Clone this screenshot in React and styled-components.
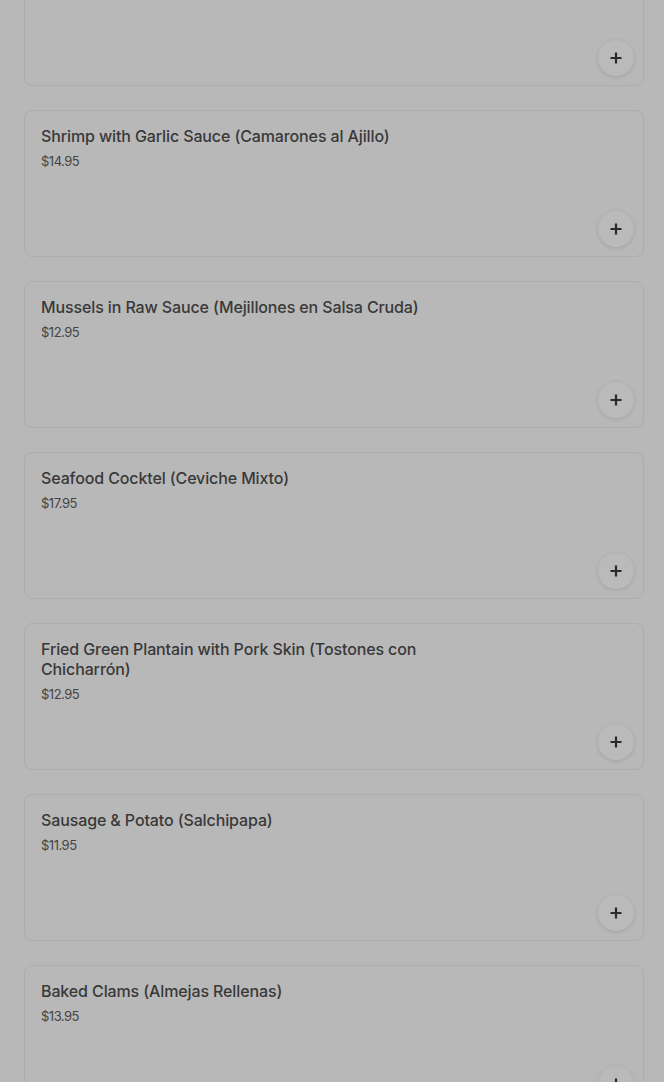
import React from "react";
import styled, { createGlobalStyle } from "styled-components";

const GlobalStyle = createGlobalStyle`
   html, body {
      margin: 0;
      padding: 0;
      background: #b8b8b8;
      font-family: Inter, "Noto Sans", sans-serif;
      overflow: hidden;
   }
`;

const Page = styled.div`
   width: 664px;
   height: 1082px;
   overflow: hidden;
   background: #b8b8b8;
`;

const List = styled.div`
   display: flex;
   flex-direction: column;
   gap: 24px;
   padding: 0 20px 0 24px;
   margin-top: -61px;
`;

const Card = styled.div`
   position: relative;
   height: 147px;
   box-sizing: border-box;
   border: 1px solid #adadad;
   border-radius: 8px;
   padding: 15px 16px;
   display: flex;
   flex-direction: column;
   gap: 6px;
`;

const Title = styled.div`
   max-width: 395px;
   font-size: 16px;
   line-height: 20px;
   font-weight: 500;
   letter-spacing: -0.12px;
   color: #383838;
`;

const Price = styled.div`
   font-size: 13px;
   line-height: 18px;
   letter-spacing: -0.5px;
   color: #444444;
`;

const AddButton = styled.button`
   position: absolute;
   right: 9px;
   bottom: 9px;
   width: 36px;
   height: 36px;
   border-radius: 50%;
   border: none;
   padding: 0;
   background: #bababa;
   box-shadow: 0 1px 4px rgba(0, 0, 0, 0.12);
   display: flex;
   align-items: center;
   justify-content: center;
   cursor: pointer;
`;

const items = [
   { name: "", price: "" },
   { name: "Shrimp with Garlic Sauce (Camarones al Ajillo)", price: "$14.95" },
   { name: "Mussels in Raw Sauce (Mejillones en Salsa Cruda)", price: "$12.95" },
   { name: "Seafood Cocktel (Ceviche Mixto)", price: "$17.95" },
   { name: "Fried Green Plantain with Pork Skin (Tostones con Chicharrón)", price: "$12.95" },
   { name: "Sausage & Potato (Salchipapa)", price: "$11.95" },
   { name: "Baked Clams (Almejas Rellenas)", price: "$13.95" },
];

const PlusIcon = () => (
   <svg width="14" height="14" viewBox="0 0 14 14">
      <path d="M7 1.5v11M1.5 7h11" stroke="#2a2a2a" strokeWidth="2.2" />
   </svg>
);

const App = () => {
   return (
      <Page>
         <GlobalStyle />
         <List>
            {items.map((item, i) => (
               <Card key={i}>
                  {item.name && <Title>{item.name}</Title>}
                  {item.price && <Price>{item.price}</Price>}
                  <AddButton aria-label="Add">
                     <PlusIcon />
                  </AddButton>
               </Card>
            ))}
         </List>
      </Page>
   );
};

export default App;
